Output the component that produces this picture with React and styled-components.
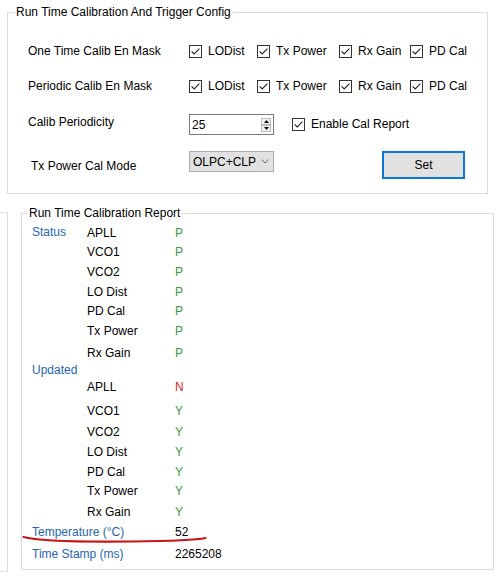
import React from "react";
import styled, { createGlobalStyle } from "styled-components";

const Global = createGlobalStyle`
  html, body { margin: 0; padding: 0; background: #fff; }
  body {
    font-family: "Liberation Sans", Arial, sans-serif;
    font-size: 12px;
    color: #000;
  }
`;

const Page = styled.div`
  width: 504px;
  height: 578px;
  overflow: hidden;
  box-sizing: border-box;
  padding-top: 12px;
`;

const Group = styled.section`
  position: relative;
  box-sizing: border-box;
  flex: none;
  border: 1px solid #dcdcdc;
  width: ${(p) => p.$w}px;
  height: ${(p) => p.$h}px;
  margin-left: ${(p) => p.$ml || 0}px;
  margin-top: ${(p) => p.$mt || 0}px;
  padding: ${(p) => p.$pad};
`;

const Legend = styled.div`
  position: absolute;
  top: -8px;
  left: ${(p) => p.$left}px;
  padding: 0 1px;
  background: #fff;
  line-height: 14px;
  white-space: nowrap;
`;

const Row = styled.div`
  display: flex;
  align-items: flex-start;
  height: ${(p) => p.$h}px;
  margin-top: ${(p) => p.$mt || 0}px;
`;

const Label = styled.div`
  flex: none;
  width: ${(p) => p.$w || 161}px;
  margin-left: ${(p) => p.$ml || 0}px;
  margin-top: ${(p) => p.$dy || 0}px;
  line-height: 14px;
  white-space: nowrap;
`;

const CheckItem = styled.label`
  flex: none;
  display: flex;
  align-items: center;
  gap: 6px;
  width: ${(p) => (p.$w ? `${p.$w}px` : "auto")};
  margin-left: ${(p) => p.$ml || 0}px;
  margin-top: ${(p) => p.$dy || 0}px;
  line-height: 14px;
  white-space: nowrap;
`;

const Box = styled.span`
  flex: none;
  width: 13px;
  height: 13px;
  box-sizing: border-box;
  border: 1px solid #333;
  background: #fff;
  display: flex;
  align-items: center;
  justify-content: center;
`;

const Spin = styled.div`
  flex: none;
  display: flex;
  align-items: center;
  box-sizing: border-box;
  width: 85px;
  height: 21px;
  border: 1px solid #7a7a7a;
  background: #fff;
  padding: 0 2px;
`;

const SpinValue = styled.span`
  flex: 1;
  line-height: 14px;
`;

const SpinButtons = styled.div`
  display: flex;
  flex-direction: column;
  width: 10px;
`;

const SpinBtn = styled.div`
  height: 7px;
  box-sizing: border-box;
  border: 1px solid #bdbdbd;
  background: #f3f3f3;
  display: flex;
  align-items: center;
  justify-content: center;
`;

const Select = styled.div`
  flex: none;
  display: flex;
  align-items: center;
  justify-content: space-between;
  box-sizing: border-box;
  width: 85px;
  height: 21px;
  border: 1px solid #adadad;
  background: #e1e1e1;
  padding: 0 4px 0 3px;
  line-height: 14px;
`;

const Button = styled.div`
  flex: none;
  box-sizing: border-box;
  width: 83px;
  height: 28px;
  margin-left: ${(p) => p.$ml || 0}px;
  border: 2px solid #0a78d4;
  background: #e1e1e1;
  display: flex;
  align-items: center;
  justify-content: center;
  line-height: 14px;
`;

const BottomRow = styled.div`
  display: flex;
  align-items: flex-start;
  margin-top: 18px;
`;

const Stub = styled.div`
  flex: none;
  box-sizing: border-box;
  width: 8px;
  height: 360px;
  border: 1px solid #dcdcdc;
  border-left: none;
`;

const ReportRow = styled.div`
  display: grid;
  grid-template-columns: 55px 88px auto;
  height: ${(p) => p.$h}px;
  line-height: 14px;
  white-space: nowrap;
`;

const Category = styled.div`
  grid-column: ${(p) => (p.$wide ? "1 / 3" : "1")};
  color: #1f65b3;
  margin-top: ${(p) => p.$dy || 0}px;
`;

const Name = styled.div`
  grid-column: 2;
  color: #000;
`;

const toneColor = { pass: "#3a9a3a", fail: "#e0262b", plain: "#000" };

const Value = styled.div`
  grid-column: 3;
  color: ${(p) => toneColor[p.$tone]};
`;

const Underline = styled.svg`
  position: absolute;
  left: 0;
  top: 318px;
  width: 190px;
  height: 14px;
  overflow: visible;
`;

const Check = () => (
  <Box>
    <svg width="11" height="11" viewBox="0 0 11 11">
      <path d="M1.6 5.4 L4.2 8 L9.4 2.6" fill="none" stroke="#222" strokeWidth="1.1" />
    </svg>
  </Box>
);

const maskItems = [
  { label: "LODist", w: 68 },
  { label: "Tx Power", w: 82 },
  { label: "Rx Gain", w: 71 },
  { label: "PD Cal" },
];

const MaskRow = ({ title, mt }) => (
  <Row $h={20} $mt={mt}>
    <Label $dy={3}>{title}</Label>
    {maskItems.map((it) => (
      <CheckItem key={it.label} $w={it.w} $dy={3}>
        <Check />
        {it.label}
      </CheckItem>
    ))}
  </Row>
);

const reportRows = [
  { cat: "Status", catDy: -1, name: "APLL", value: "P", tone: "pass", h: 19 },
  { name: "VCO1", value: "P", tone: "pass", h: 20 },
  { name: "VCO2", value: "P", tone: "pass", h: 20 },
  { name: "LO Dist", value: "P", tone: "pass", h: 19 },
  { name: "PD Cal", value: "P", tone: "pass", h: 20 },
  { name: "Tx Power", value: "P", tone: "pass", h: 22 },
  { name: "Rx Gain", value: "P", tone: "pass", h: 17 },
  { cat: "Updated", h: 17 },
  { name: "APLL", value: "N", tone: "fail", h: 24 },
  { name: "VCO1", value: "Y", tone: "pass", h: 21 },
  { name: "VCO2", value: "Y", tone: "pass", h: 20 },
  { name: "LO Dist", value: "Y", tone: "pass", h: 20 },
  { name: "PD Cal", value: "Y", tone: "pass", h: 19 },
  { name: "Tx Power", value: "Y", tone: "pass", h: 21 },
  { name: "Rx Gain", value: "Y", tone: "pass", h: 20 },
  { cat: "Temperature (°C)", wide: true, value: "52", tone: "plain", h: 22 },
  { cat: "Time Stamp (ms)", wide: true, value: "2265208", tone: "plain", h: 14 },
];

export default function App() {
  return (
    <>
      <Global />
      <Page>
        <Group $w={481} $h={182} $ml={7} $pad="28px 0 0 20px">
          <Legend $left={7}>Run Time Calibration And Trigger Config</Legend>
          <MaskRow title="One Time Calib En Mask" mt={0} />
          <MaskRow title="Periodic Calib En Mask" mt={15} />
          <Row $h={21} $mt={18}>
            <Label $dy={1}>Calib Periodicity</Label>
            <Spin>
              <SpinValue>25</SpinValue>
              <SpinButtons>
                <SpinBtn>
                  <svg width="5" height="3" viewBox="0 0 5 3">
                    <path d="M0 3 L2.5 0 L5 3 Z" fill="#111" />
                  </svg>
                </SpinBtn>
                <SpinBtn>
                  <svg width="5" height="3" viewBox="0 0 5 3">
                    <path d="M0 0 L2.5 3 L5 0 Z" fill="#111" />
                  </svg>
                </SpinBtn>
              </SpinButtons>
            </Spin>
            <CheckItem $ml={18} $dy={3}>
              <Check />
              Enable Cal Report
            </CheckItem>
          </Row>
          <Row $h={28} $mt={16}>
            <Label $w={158} $ml={3} $dy={8}>Tx Power Cal Mode</Label>
            <Select>
              <span>OLPC+CLP</span>
              <svg width="8" height="5" viewBox="0 0 8 5">
                <path d="M0.5 0.5 L4 4 L7.5 0.5" fill="none" stroke="#666" strokeWidth="1" />
              </svg>
            </Select>
            <Button $ml={108}>Set</Button>
          </Row>
        </Group>
        <BottomRow>
          <Stub />
          <Group $w={473} $h={357} $ml={13} $mt={1} $pad="12px 0 0 10px">
            <Legend $left={6}>Run Time Calibration Report</Legend>
            {reportRows.map((r, i) => (
              <ReportRow key={i} $h={r.h}>
                {r.cat && (
                  <Category $wide={r.wide} $dy={r.catDy}>
                    {r.cat}
                  </Category>
                )}
                {r.name && <Name>{r.name}</Name>}
                {r.value && <Value $tone={r.tone}>{r.value}</Value>}
              </ReportRow>
            ))}
            <Underline viewBox="0 0 190 14">
              <path
                d="M1.5 5 C 15 9, 60 10, 110 9.5 S 175 8, 183.5 6"
                fill="none"
                stroke="#c8141b"
                strokeWidth="2.2"
                strokeLinecap="round"
              />
            </Underline>
          </Group>
        </BottomRow>
      </Page>
    </>
  );
}
